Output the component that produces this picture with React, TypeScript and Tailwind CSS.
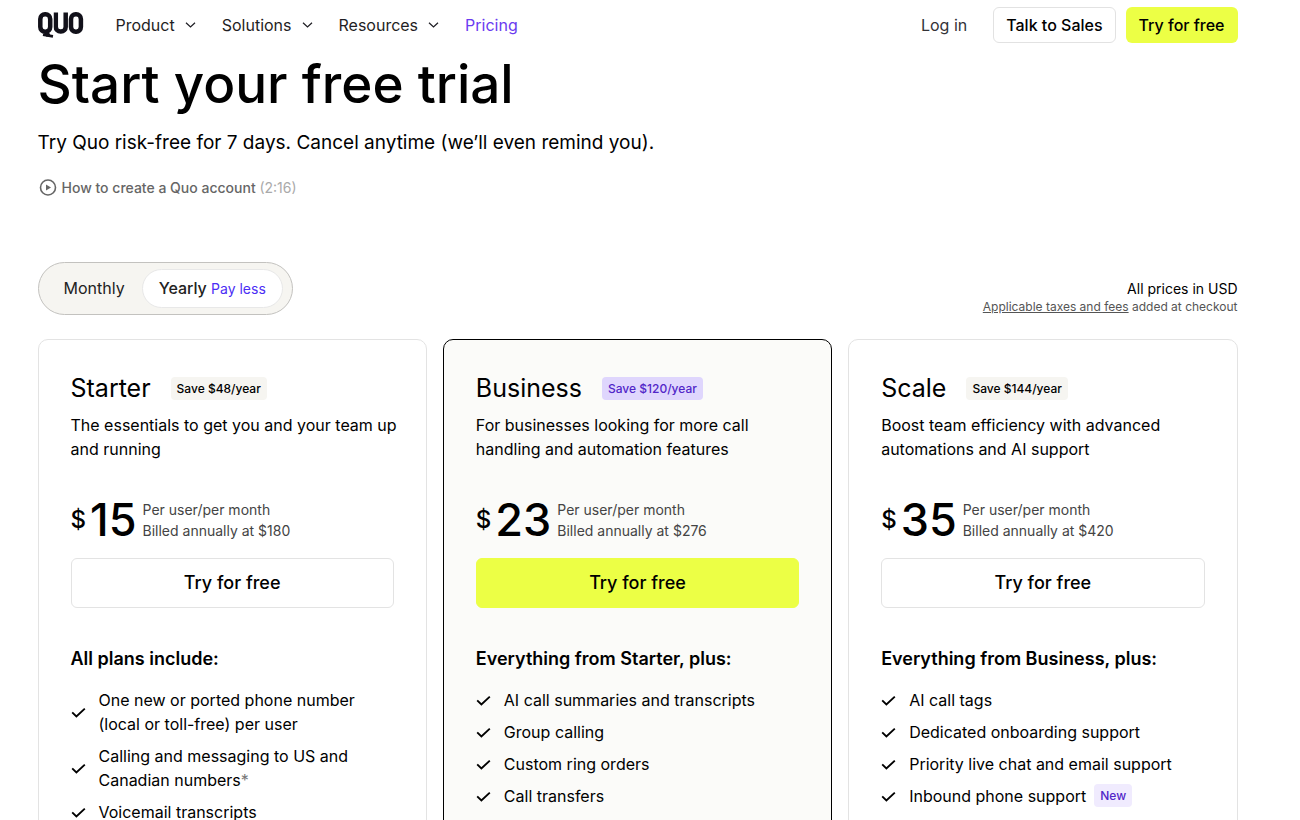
import React, { useState } from 'react';

interface Feature {
  label: string;
  note?: boolean;
  isNew?: boolean;
}

interface Plan {
  name: string;
  savings: string;
  description: string;
  price: number;
  annual: number;
  featuresTitle: string;
  features: Feature[];
  highlighted?: boolean;
}

const navItems = ['Product', 'Solutions', 'Resources'];

const plans: Plan[] = [
  {
    name: 'Starter',
    savings: 'Save $48/year',
    description: 'The essentials to get you and your team up and running',
    price: 15,
    annual: 180,
    featuresTitle: 'All plans include:',
    features: [
      { label: 'One new or ported phone number (local or toll-free) per user' },
      { label: 'Calling and messaging to US and Canadian numbers', note: true },
      { label: 'Voicemail transcripts' },
    ],
  },
  {
    name: 'Business',
    savings: 'Save $120/year',
    description: 'For businesses looking for more call handling and automation features',
    price: 23,
    annual: 276,
    featuresTitle: 'Everything from Starter, plus:',
    features: [
      { label: 'AI call summaries and transcripts' },
      { label: 'Group calling' },
      { label: 'Custom ring orders' },
      { label: 'Call transfers' },
    ],
    highlighted: true,
  },
  {
    name: 'Scale',
    savings: 'Save $144/year',
    description: 'Boost team efficiency with advanced automations and AI support',
    price: 35,
    annual: 420,
    featuresTitle: 'Everything from Business, plus:',
    features: [
      { label: 'AI call tags' },
      { label: 'Dedicated onboarding support' },
      { label: 'Priority live chat and email support' },
      { label: 'Inbound phone support', isNew: true },
    ],
  },
];

function Logo() {
  return (
    <svg width="46" height="26" viewBox="0 0 46 26" fill="none" stroke="#12111a" strokeWidth="4.5" aria-hidden="true">
      <rect x="2.3" y="2.3" width="9.9" height="17.4" rx="4.7" />
      <line x1="5" y1="22.8" x2="15" y2="24.4" strokeWidth="2.6" />
      <line x1="8" y1="19" x2="10.5" y2="24" strokeWidth="4" />
      <svg x="15.5" y="0.5" width="15" height="22">
        <rect x="2.3" y="-12" width="9.9" height="31.1" rx="4.7" />
      </svg>
      <rect x="33" y="2.3" width="9.9" height="17.4" rx="4.7" />
    </svg>
  );
}

function ChevronIcon() {
  return (
    <svg width="11" height="6" viewBox="0 0 11 6" fill="none" aria-hidden="true">
      <path d="M1 0.7l4.5 4.3L10 0.7" stroke="currentColor" strokeWidth="1.2" />
    </svg>
  );
}

function CheckIcon() {
  return (
    <svg className="h-4 w-4 shrink-0" viewBox="0 0 16 16" fill="none" aria-hidden="true">
      <path d="M1.2 8.4l4.2 4.1L13.8 4.6" stroke="currentColor" strokeWidth="1.9" />
    </svg>
  );
}

function Header() {
  return (
    <header className="flex items-center justify-between pt-[7px]">
      <div className="flex items-center">
        <a href="#" aria-label="Quo">
          <Logo />
        </a>
        <nav className="ml-8 flex items-center gap-[26px] text-base text-[#1f1e24]">
          {navItems.map((item) => (
            <button key={item} type="button" className="flex items-center gap-2.5">
              {item}
              <ChevronIcon />
            </button>
          ))}
          <a href="#" className="text-[#6b3bf0]">Pricing</a>
        </nav>
      </div>
      <div className="flex items-center gap-2.5 text-base text-black">
        <a href="#" className="mr-4 text-[#333238]">Log in</a>
        <button type="button" className="h-9 rounded-md border border-[#e2e2e2] px-3 font-medium">
          Talk to Sales
        </button>
        <button type="button" className="h-9 rounded-md bg-[#ecff45] px-[13px] font-medium">
          Try for free
        </button>
      </div>
    </header>
  );
}

function PlanCard({ plan }: { plan: Plan }) {
  return (
    <section
      className={`rounded-[10px] border p-8 ${
        plan.highlighted ? 'border-black bg-[#fbfbf9]' : 'border-[#e3e3e3] bg-white'
      }`}
    >
      <div className="flex h-8 items-center gap-5">
        <h2 className="text-[25px] leading-8">{plan.name}</h2>
        <span
          className={`rounded px-1.5 text-[12px] leading-[23px] font-medium ${
            plan.highlighted ? 'bg-[#dfd6fd] text-[#5226c8]' : 'bg-[#f6f5f1]'
          }`}
        >
          {plan.savings}
        </span>
      </div>
      <p className="-mr-3 mt-[9px] text-base leading-6">{plan.description}</p>

      <div className="mt-[33px] flex h-[52px] items-center">
        <span className="mr-1 text-2xl font-medium">$</span>
        <span className="mr-1.5 text-[45px] leading-[52px] font-medium">{plan.price}</span>
        <div className="text-sm leading-[21px] text-[#444]">
          <p>Per user/per month</p>
          <p>Billed annually at ${plan.annual}</p>
        </div>
      </div>
      <button
        type="button"
        className={`mt-3 h-[50px] w-full rounded-md border text-lg font-medium ${
          plan.highlighted ? 'border-[#ecff45] bg-[#ecff45]' : 'border-[#e3e3e3] bg-white'
        }`}
      >
        Try for free
      </button>

      <h3 className="mt-[38px] text-lg leading-[26px] font-semibold">{plan.featuresTitle}</h3>
      <ul className="mt-4 space-y-2">
        {plan.features.map((feature) => (
          <li key={feature.label} className="flex items-center gap-3">
            <CheckIcon />
            <span className="text-base leading-6">
              {feature.label}
              {feature.note && <span className="text-[#777]">*</span>}
              {feature.isNew && (
                <span className="ml-2 inline-block rounded bg-[#f0ebfe] px-1.5 align-top text-[12px] leading-[23px] font-medium text-[#5226c8]">
                  New
                </span>
              )}
            </span>
          </li>
        ))}
      </ul>
    </section>
  );
}

export default function App() {
  const [billing, setBilling] = useState('yearly');

  return (
    <div className="min-h-screen bg-white pr-[25px] font-['Inter',sans-serif] text-black">
      <div className="mx-auto max-w-[1200px]">
        <Header />

        <main>
          <h1 className="mt-2 text-[53px] leading-[66px] font-medium">Start your free trial</h1>
          <p className="mt-[11px] text-[19px] leading-[30px]">
            Try Quo risk-free for 7 days. Cancel anytime (we’ll even remind you).
          </p>
          <button type="button" className="mt-5 flex items-center gap-1 text-sm font-medium text-[#666]">
            <svg className="h-5 w-5" viewBox="0 0 20 20" fill="none">
              <circle cx="10" cy="9.5" r="7.5" stroke="currentColor" strokeWidth="1.6" />
              <path d="M8 6.5v6l5-3z" fill="currentColor" />
            </svg>
            <span>
              How to create a Quo account <span className="font-normal text-[#aaa]">(2:16)</span>
            </span>
          </button>

          <div className="mt-16 flex items-end justify-between">
            <div className="flex h-[53px] items-center rounded-full border border-[#c3c2bf] bg-[#f6f5f1] px-[9px] text-[#222]">
              <button
                type="button"
                aria-pressed={billing === 'monthly'}
                onClick={() => setBilling('monthly')}
                className="h-[39px] pr-[17px] pb-0.5 pl-4"
              >
                Monthly
              </button>
              <button
                type="button"
                aria-pressed={billing === 'yearly'}
                onClick={() => setBilling('yearly')}
                className="h-[39px] rounded-full border border-[#e8e8e8] bg-white px-4 pb-0.5 font-medium"
              >
                Yearly <span className="text-sm font-normal text-[#4b2df5]">Pay less</span>
              </button>
            </div>
            <div className="text-right">
              <p className="text-sm leading-5">All prices in USD</p>
              <p className="text-[12px] leading-4 text-[#555]">
                <a href="#" className="underline">Applicable taxes and fees</a> added at checkout
              </p>
            </div>
          </div>

          <div className="mt-6 grid grid-cols-3 gap-4">
            {plans.map((plan) => (
              <PlanCard key={plan.name} plan={plan} />
            ))}
          </div>
        </main>
      </div>
    </div>
  );
}
